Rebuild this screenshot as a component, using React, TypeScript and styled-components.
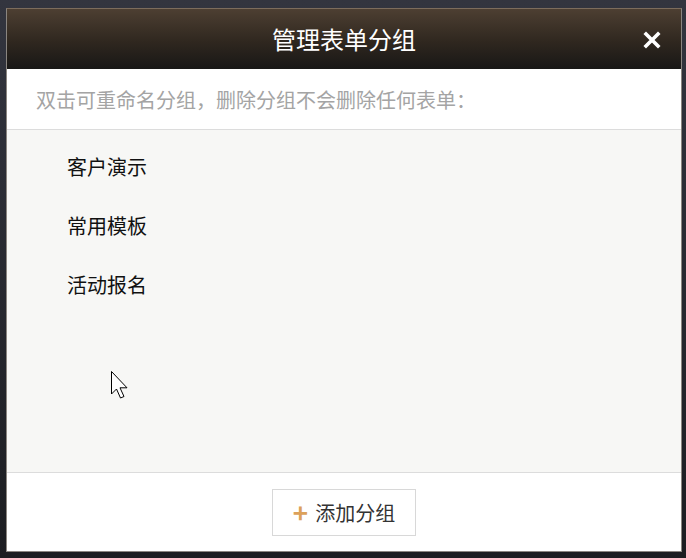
import React from "react";
import styled, { createGlobalStyle } from "styled-components";

const Global = createGlobalStyle`
  html, body {
    margin: 0;
    padding: 0;
    height: 558px;
    overflow: hidden;
    background: linear-gradient(#33353f, #1c1d21);
    font-family: "Noto Sans CJK SC", "Noto Sans", sans-serif;
  }
`;

const Screen = styled.div`
  position: relative;
  height: 558px;
  padding: 8px 4px 0 6px;
  box-sizing: border-box;
`;

const Dialog = styled.div`
  width: 676px;
  height: 544px;
  box-sizing: border-box;
  border: 1px solid #8a8580;
  border-top-color: #7c6c5c;
  display: flex;
  flex-direction: column;
  background: #fff;
`;

const Header = styled.div`
  position: relative;
  height: 60px;
  flex: none;
  display: flex;
  align-items: center;
  justify-content: center;
  background: linear-gradient(#4d3f32, #2f271f 55%, #181716);
`;

const Title = styled.h1`
  margin: 0;
  color: #fff;
  font-size: 24px;
  font-weight: 400;
  line-height: 1;
`;

const Close = styled.button`
  position: absolute;
  right: 20px;
  top: 22px;
  width: 18px;
  height: 18px;
  padding: 0;
  border: 0;
  background: none;
  cursor: pointer;
`;

const Hint = styled.div`
  height: 60px;
  flex: none;
  display: flex;
  align-items: center;
  padding-left: 29px;
  color: #a4a4a4;
  font-size: 20px;
  border-bottom: 1px solid #dcdcdc;
`;

const List = styled.ul`
  flex: 1;
  margin: 0;
  padding: 7px 0 0 60px;
  list-style: none;
  background: #f7f7f5;
  border-bottom: 1px solid #dcdcdc;
`;

const Item = styled.li`
  height: 59px;
  line-height: 59px;
  font-size: 20px;
  color: #111;
`;

const Footer = styled.div`
  height: 78px;
  flex: none;
  display: flex;
  justify-content: center;
  align-items: flex-start;
  padding-top: 16px;
  box-sizing: border-box;
`;

const AddButton = styled.button`
  width: 144px;
  height: 47px;
  display: flex;
  align-items: center;
  justify-content: center;
  gap: 7px;
  border: 1px solid #d8d8d8;
  background: #fff;
  color: #333;
  font-family: inherit;
  font-size: 20px;
  cursor: pointer;
`;

const Plus = styled.span`
  color: #dca15a;
  font-size: 26px;
  font-weight: 700;
  line-height: 1;
  margin-top: -2px;
`;

const Pointer = styled.svg`
  position: absolute;
  left: 110px;
  top: 370px;
`;

const groups = ["客户演示", "常用模板", "活动报名"];

const App: React.FC = () => (
  <>
    <Global />
    <Screen>
      <Dialog>
        <Header>
          <Title>管理表单分组</Title>
          <Close aria-label="关闭">
            <svg width="18" height="18" viewBox="0 0 18 18">
              <path d="M3 3 L15 15 M15 3 L3 15" stroke="#fff" strokeWidth="3.6" strokeLinecap="square" />
            </svg>
          </Close>
        </Header>
        <Hint>双击可重命名分组，删除分组不会删除任何表单：</Hint>
        <List>
          {groups.map((g) => (
            <Item key={g}>{g}</Item>
          ))}
        </List>
        <Footer>
          <AddButton>
            <Plus>+</Plus>
            添加分组
          </AddButton>
        </Footer>
      </Dialog>
      <Pointer width="22" height="32" viewBox="0 0 22 32">
        <path
          d="M1.5 1.5 L1.5 24 L6.5 19 L10.5 28 L14 26.5 L10 17.8 L17 17.8 Z"
          fill="#fff"
          stroke="#000"
          strokeWidth="1"
          strokeLinejoin="miter"
        />
      </Pointer>
    </Screen>
  </>
);

export default App;
